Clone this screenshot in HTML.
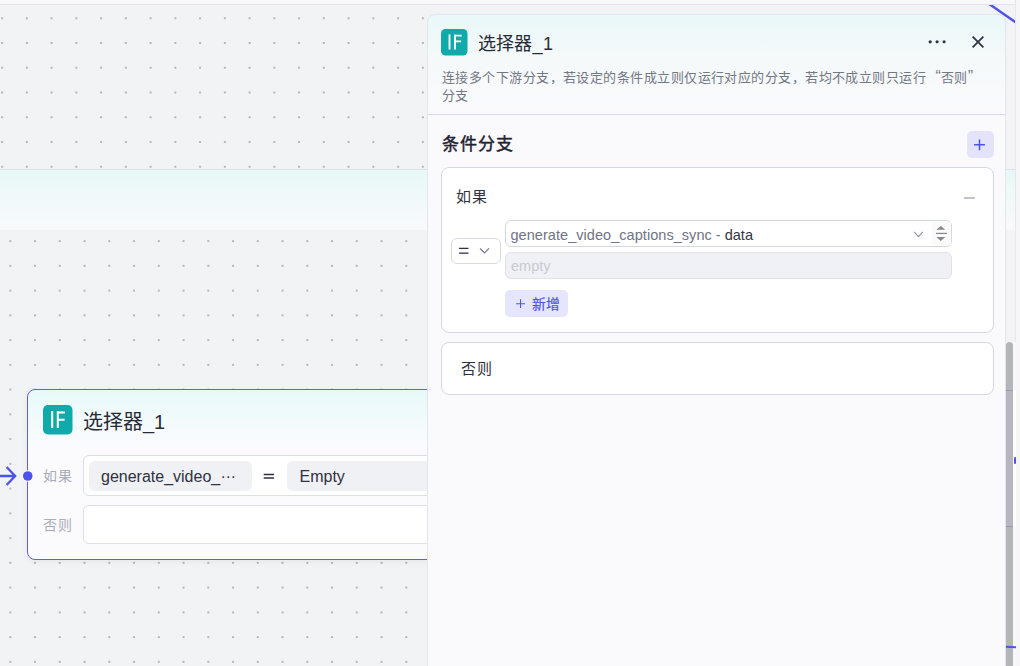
<!DOCTYPE html>
<html lang="zh-CN"><head><meta charset="utf-8">
<style>
*{box-sizing:border-box;margin:0;padding:0}
html,body{width:1020px;height:666px;overflow:hidden}
body{position:relative;background:#f2f3f5;font-family:"Liberation Sans",sans-serif;color:#1f2230}
.abs{position:absolute}
#topstrip{left:0;top:0;width:1020px;height:5px;background:#f8f8fb;border-bottom:1px solid #e4e4ee}
#rightstrip{left:1015px;top:0;width:5px;height:666px;background:#f6f6f8;border-left:1px solid #e6e6ec}
#band{left:0;top:168.8px;width:1015px;height:61.5px;border-top:1.8px solid #dfe0e5;background:linear-gradient(#e7f8f7 0%,#eff9f9 40%,#f9f9fc 100%)}
.node{left:27px;top:389px;width:460px;height:171px;border:1px solid #5b5ff0;border-radius:8px;
  background:linear-gradient(#e8f9f9 0px,#fbfbfe 58px);box-shadow:0 2px 6px rgba(0,0,0,.05)}
.ifico{background:#10aca6;border-radius:5px}
.lbl{color:#a9acb9;font-size:14px;letter-spacing:1.1px}
.box{border:1px solid #dcdfea;background:#fff;border-radius:6px}
.chip{background:#f0f1f5;border-radius:6px;font-size:16px;color:#2e3140}
#panel{left:427px;top:14px;width:579px;height:700px;border:1px solid #e3e5ef;border-radius:8px;
  background:linear-gradient(#e9f8f8 0px,#f4f9fa 40px,#fafafd 95px)}
</style></head>
<body>
<!-- dot grids -->
<svg class="abs" style="left:0;top:5px" width="1015" height="164">
  <defs><pattern id="dA" x="2.1" y="-11.5" width="24.75" height="24.75" patternUnits="userSpaceOnUse">
    <circle cx="0" cy="24.75" r="0.9" fill="#9a9ca2"/><circle cx="24.75" cy="24.75" r="0.9" fill="#9a9ca2"/>
    <circle cx="0" cy="0" r="0.9" fill="#9a9ca2"/><circle cx="24.75" cy="0" r="0.9" fill="#9a9ca2"/></pattern></defs>
  <rect width="1015" height="164" fill="url(#dA)"/>
</svg>
<svg class="abs" style="left:0;top:230px" width="1015" height="436">
  <defs><pattern id="dB" x="10.3" y="11.1" width="24.75" height="24.75" patternUnits="userSpaceOnUse">
    <circle cx="0" cy="24.75" r="0.9" fill="#9a9ca2"/><circle cx="24.75" cy="24.75" r="0.9" fill="#9a9ca2"/>
    <circle cx="0" cy="0" r="0.9" fill="#9a9ca2"/><circle cx="24.75" cy="0" r="0.9" fill="#9a9ca2"/></pattern></defs>
  <rect width="1015" height="436" fill="url(#dB)"/>
</svg>
<!-- right strip + blue line -->
<svg class="abs" style="left:980px;top:0" width="40" height="40">
  <path d="M8.5 3.6L37 23.2" stroke="#4d53e8" stroke-width="2.4" fill="none"/>
</svg>
<div id="topstrip" class="abs"></div>
<div id="band" class="abs"></div>

<!-- node card -->
<div class="node abs">
</div>
<!-- node contents positioned in page coords -->
<svg class="abs" style="left:43px;top:405px" width="30" height="30" viewBox="0 0 30 30">
  <rect x="0" y="0" width="29.5" height="29.5" rx="5" fill="#11aaab"/>
  <path d="M9.2 6V23M14.8 6V23M13.8 7.5H22M13.8 14.7H21.6" stroke="#fff" stroke-width="2" fill="none"/>
</svg>
<div class="abs" style="left:83px;top:408px;font-size:20px;line-height:28px;color:#282a36">选择器_1</div>
<svg class="abs" style="left:0;top:464px" width="40" height="24">
  <path d="M0 12H15M6.6 3L15.2 12L6.6 21" stroke="#4d53e8" stroke-width="2.3" fill="none"/>
  <circle cx="27.75" cy="12" r="5.8" fill="#fff"/>
  <circle cx="27.75" cy="12" r="4.8" fill="#4d53e8"/>
</svg>
<div class="abs lbl" style="left:43.3px;top:466.3px;line-height:20px">如果</div>
<div class="abs lbl" style="left:43.3px;top:514.5px;line-height:20px">否则</div>
<div class="abs box" style="left:82.5px;top:454.5px;width:400px;height:41px"></div>
<div class="abs chip" style="left:89px;top:461px;width:162.5px;height:29.5px;line-height:31px;padding-left:12px">generate_video_<span style="position:relative;top:-4px;margin-left:0px">…</span></div>
<svg class="abs" style="left:260px;top:465px" width="20" height="20"><path d="M3.7 9.4H14M3.7 13H14" stroke="#2e3140" stroke-width="1.5" fill="none"/></svg>
<div class="abs chip" style="left:287px;top:461px;width:200px;height:29.5px;line-height:31px;padding-left:12.5px">Empty</div>
<div class="abs box" style="left:82.5px;top:504.5px;width:400px;height:39px"></div>

<div id="rightstrip" class="abs"></div>

<!-- panel -->
<div id="panel" class="abs"></div>
<svg class="abs" style="left:441px;top:29px" width="27" height="27" viewBox="0 0 27 27">
  <rect x="0" y="0" width="26.5" height="26.5" rx="4.5" fill="#11aaab"/>
  <path d="M8.5 5.5V20.5M14 5.5V20.5M13.1 6.6H20.7M13.1 12.4H20.2" stroke="#fff" stroke-width="1.9" fill="none"/>
</svg>
<div class="abs" style="left:477.5px;top:31.2px;font-size:18px;letter-spacing:0.35px;line-height:26px;color:#282a36">选择器_1</div>
<svg class="abs" style="left:920px;top:30px" width="70" height="24">
  <circle cx="10.2" cy="11.8" r="1.6" fill="#2d3040"/>
  <circle cx="17.1" cy="11.8" r="1.55" fill="#2d3040"/>
  <circle cx="24.1" cy="11.8" r="1.55" fill="#2d3040"/>
  <path d="M52.6 6.6L63.4 17.4M63.4 6.6L52.6 17.4" stroke="#2d3040" stroke-width="1.7" fill="none"/>
</svg>
<div class="abs" style="left:442px;top:68px;width:560px;font-size:13px;letter-spacing:0.45px;line-height:18.3px;color:#737784;white-space:nowrap">连接多个下游分支，若设定的条件成立则仅运行对应的分支，若均不成立则只运行<span style="margin-left:9.2px;margin-right:0;font-size:16px;letter-spacing:0">“</span>否则<span style="margin-left:0;font-size:16px;letter-spacing:0">”</span><br>分支</div>
<div class="abs" style="left:428px;top:114px;width:577px;height:1px;background:#d9dbe6"></div>
<div class="abs" style="left:442.3px;top:132.8px;font-size:17px;letter-spacing:1px;font-weight:400;-webkit-text-stroke:0.45px #1f2230;line-height:24px;color:#1f2230">条件分支</div>
<div class="abs" style="left:967px;top:131px;width:26.6px;height:26.5px;border-radius:5px;background:#e3e4fc"></div>
<svg class="abs" style="left:967px;top:131px" width="27" height="27">
  <path d="M12.5 8.4V19.2M7.1 13.8H17.9" stroke="#4d53e8" stroke-width="1.5" fill="none"/>
</svg>

<!-- condition box -->
<div class="abs box" style="left:441px;top:167px;width:553px;height:165.5px;border-color:#d5d8e4;border-radius:8px"></div>
<div class="abs" style="left:456px;top:185.8px;font-size:15px;letter-spacing:1px;line-height:22px;color:#2e3140">如果</div>
<div class="abs" style="left:964px;top:197px;width:11px;height:1.5px;background:#c3c5ce"></div>
<div class="abs box" style="left:451px;top:237.5px;width:49.5px;height:26.5px;border-color:#d7dae6"></div>
<svg class="abs" style="left:451px;top:237px" width="50" height="27">
  <path d="M8 11.3H17.5M8 16.2H17.5" stroke="#2e3140" stroke-width="1.25" fill="none"/>
  <path d="M29 11.3L33.5 16L38 11.3" stroke="#6f7385" stroke-width="1.1" fill="none"/>
</svg>
<div class="abs box" style="left:505px;top:220px;width:447px;height:26.5px;border-color:#d3d6e3"></div>
<div class="abs" style="left:510.5px;top:224.5px;font-size:14.5px;line-height:20px;white-space:nowrap"><span style="color:#6f7385;letter-spacing:0.05px">generate_video_captions_sync</span><span style="color:#6f7385"> - </span><span style="color:#333542">data</span></div>
<svg class="abs" style="left:905px;top:221px" width="47" height="25">
  <rect x="27" y="1" width="18.5" height="23" fill="#fafafa"/>
  <path d="M9.2 10.8L13.5 15.6L17.9 10.8" stroke="#8d90a0" stroke-width="1.1" fill="none"/>
  <path d="M31.3 8.7L35.8 5L40.4 8.7Z M31.3 16L35.8 20L40.4 16Z" fill="#88898f"/>
  <path d="M31 12.4H42" stroke="#88898f" stroke-width="1.2"/>
</svg>
<div class="abs box" style="left:505px;top:252px;width:447px;height:26.5px;background:#f0f1f6;border-color:#dfe1ea"></div>
<div class="abs" style="left:511px;top:255.5px;font-size:14.5px;line-height:20px;color:#c8cad2">empty</div>
<div class="abs" style="left:505px;top:290px;width:63px;height:26.5px;border-radius:5px;background:#e5e6fd"></div>
<svg class="abs" style="left:505px;top:290px" width="30" height="27">
  <path d="M15.6 9.3V18.1M11.2 13.7H20" stroke="#4d53e8" stroke-width="1.1" fill="none"/>
</svg>
<div class="abs" style="left:532.4px;top:293.8px;font-size:13.8px;letter-spacing:-0.4px;-webkit-text-stroke:0.2px #4d53e8;line-height:22px;color:#4d53e8">新增</div>

<!-- else box -->
<div class="abs box" style="left:441px;top:342px;width:553px;height:52.5px;border-color:#d5d8e4;border-radius:8px"></div>
<div class="abs" style="left:460.5px;top:358.3px;font-size:15px;letter-spacing:1px;line-height:22px;color:#2e3140">否则</div>

<!-- scrollbar -->
<div class="abs" style="left:1005.5px;top:342px;width:10px;height:330px;background:#f7f7f9"></div>
<div class="abs" style="left:1013px;top:390px;width:2.5px;height:137px;background:#fff"></div>
<div class="abs" style="left:1006px;top:342px;width:7px;height:330px;border-radius:3.5px 3.5px 0 0;background:#b3b6b9"></div>
<div class="abs" style="left:1006px;top:390px;width:7px;height:137px;background:#b7b6bf;border-top:1px solid #9a9bb0;border-bottom:1px solid #9a9bb0"></div>
<div class="abs" style="left:1013.5px;top:456.5px;width:2px;height:7px;border-radius:1px;background:#4d53e8"></div>
<div class="abs" style="left:1006px;top:646px;width:9.5px;height:2px;background:#4d53e8;transform:rotate(3deg)"></div>
</body></html>
